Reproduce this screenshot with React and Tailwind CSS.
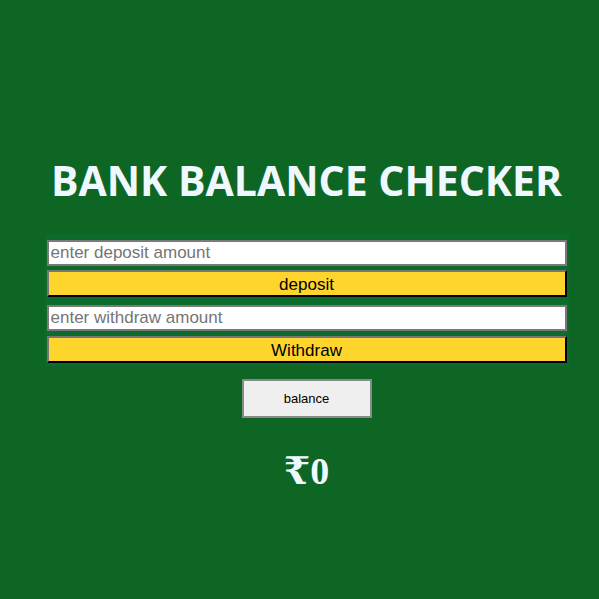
export default function App() {
  return (
    <div className="min-h-[599px] w-full bg-[#0e6625] flex flex-col items-center pt-[152px] pl-[14px]" style={{fontFamily: '"Liberation Sans", Arial, sans-serif'}}>
      <h1 className="text-[41px] font-bold text-[#f0f8ff] leading-[57px]" style={{fontFamily: '"Open Sans", sans-serif'}}>
        BANK BALANCE CHECKER
      </h1>
      <div className="mt-[25px] w-[524px] bg-[#0b6c2b] px-[2px] pt-[6px] pb-[3px] flex flex-col">
        <input
          className="h-[26px] w-full bg-white border-2 border-[#7a7a7a] px-[2px] text-[17px] text-black placeholder:text-[#757575] outline-none"
          placeholder="enter deposit amount"
        />
        <button className="mt-[4px] h-[27px] w-full bg-[#fed52c] border-2 border-t-[#767676] border-l-[#767676] border-b-black border-r-black text-[17px] text-black">
          deposit
        </button>
        <input
          className="mt-[8px] h-[26px] w-full bg-white border-2 border-[#7a7a7a] px-[2px] text-[17px] text-black placeholder:text-[#757575] outline-none"
          placeholder="enter withdraw amount"
        />
        <button className="mt-[5px] h-[27px] w-full bg-[#fed52c] border-2 border-t-[#767676] border-l-[#767676] border-b-black border-r-black text-[17px] text-black">
          Withdraw
        </button>
      </div>
      <button className="mt-[13px] w-[130px] h-[39px] bg-[#efefef] border-2 border-[#8a8a8a] text-[13px] text-black">
        balance
      </button>
      <div className="mt-[31px] text-[38px] font-bold text-[#f0f8ff] leading-[44px]" style={{fontFamily: '"Liberation Serif", "DejaVu Serif", serif'}}>
        ₹0
      </div>
    </div>
  );
}
